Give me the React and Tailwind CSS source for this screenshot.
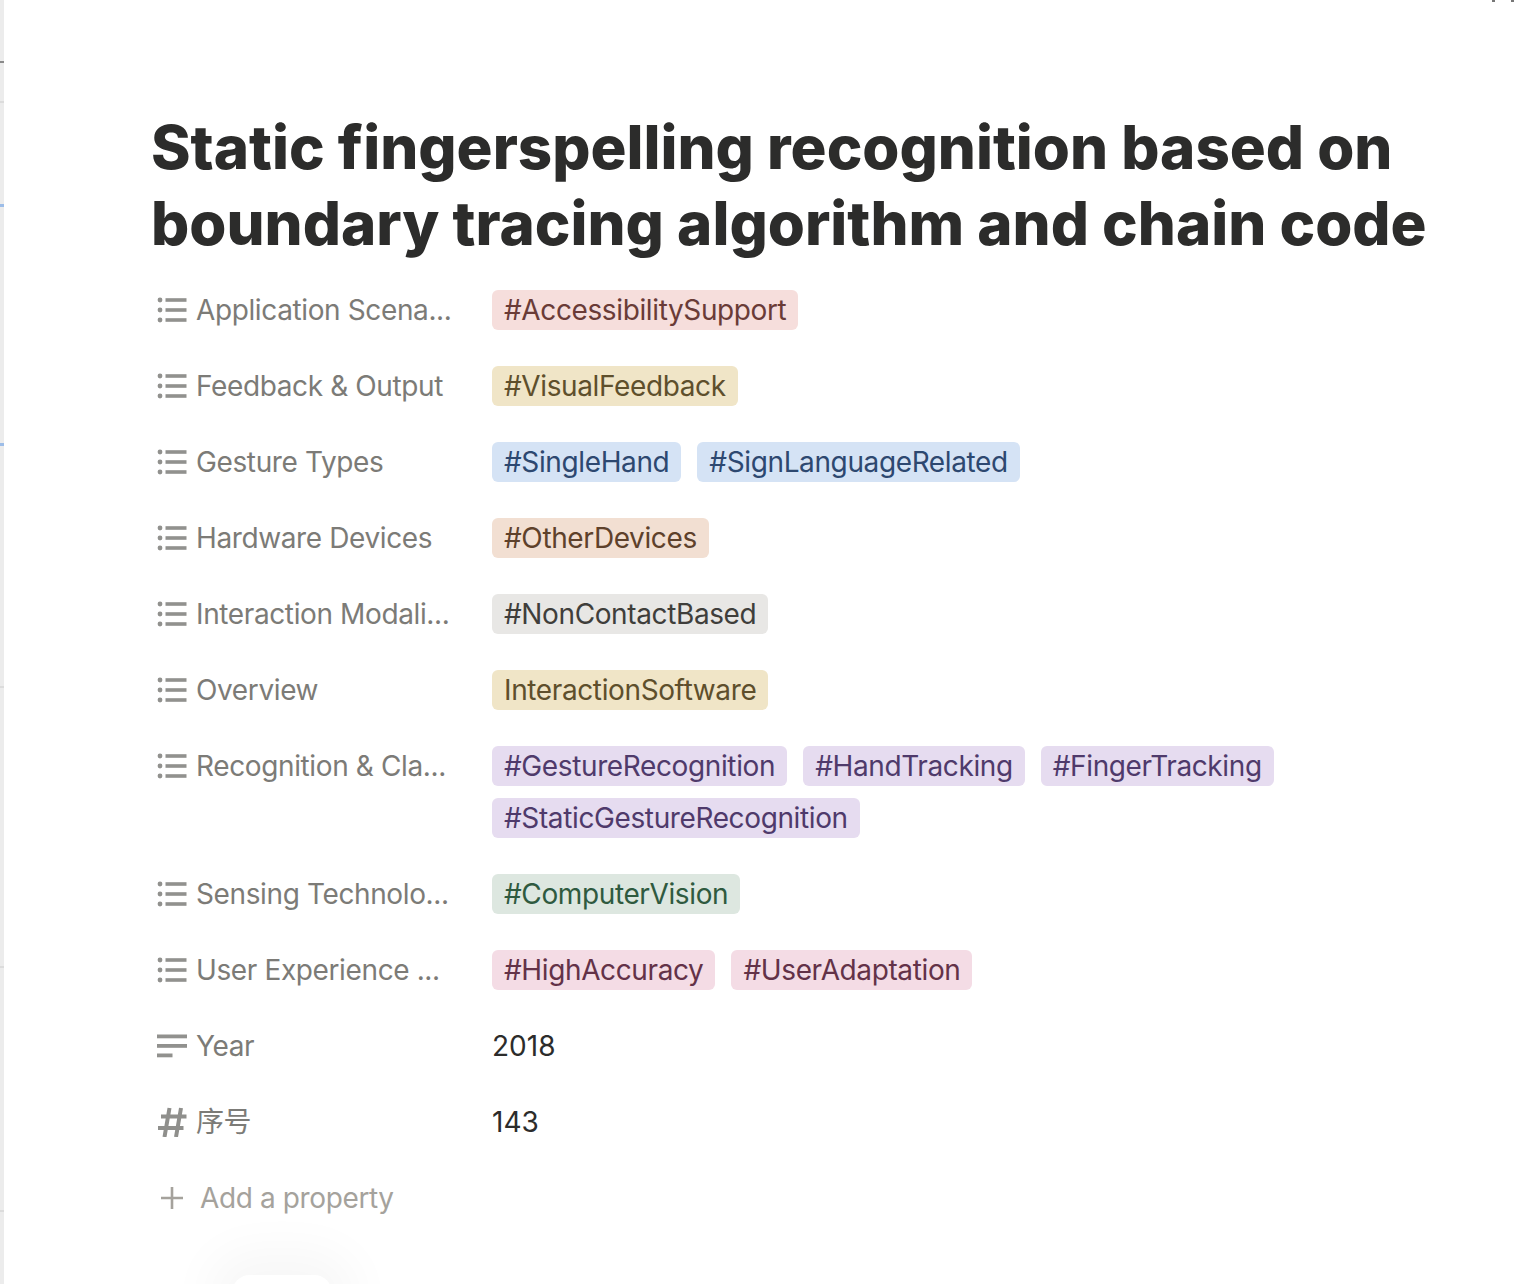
import React from "react";

const ListIcon = () => (
  <svg width="30" height="26" viewBox="0 0 30 26" className="shrink-0 text-[#91918e]" fill="currentColor">
    <circle cx="3" cy="3" r="2.4" />
    <circle cx="3" cy="13" r="2.4" />
    <circle cx="3" cy="23" r="2.4" />
    <rect x="8.500" y="1.200" width="21" height="3.600" />
    <rect x="8.500" y="11.200" width="21" height="3.600" />
    <rect x="8.500" y="21.200" width="21" height="3.600" />
  </svg>
);

const TextIcon = () => (
  <svg width="30" height="26" viewBox="0 0 30 26" className="shrink-0 text-[#91918e]" fill="currentColor">
    <rect x="0" y="1.500" width="30" height="3.800" />
    <rect x="0" y="11" width="30" height="3.800" />
    <rect x="0" y="20.500" width="15.500" height="3.800" />
  </svg>
);

const NumberIcon = () => (
  <svg width="30" height="30" viewBox="0 0 30 30" className="shrink-0 text-[#8f8f8c]" fill="none" stroke="currentColor" strokeWidth="4">
    <path d="M12.500 1 7.500 30M24 1l-5 29M4 9.500h25.500M1 21h25.500" />
  </svg>
);

const colors = {
  red: "bg-[#f6dedc] text-[#6a3b37]",
  yellow: "bg-[#f0e5c7] text-[#5e4f2c]",
  blue: "bg-[#d5e3f5] text-[#2d4870]",
  orange: "bg-[#f2dfd2] text-[#5e412b]",
  gray: "bg-[#e8e7e5] text-[#3f3e3b]",
  purple: "bg-[#e6dcf0] text-[#4f3a6b]",
  green: "bg-[#dde7e0] text-[#2f5a3f]",
  pink: "bg-[#f4dce5] text-[#633248]",
};

const rows = [
  { label: "Application Scena...", color: "red", tags: ["#AccessibilitySupport"] },
  { label: "Feedback & Output", color: "yellow", tags: ["#VisualFeedback"] },
  { label: "Gesture Types", color: "blue", tags: ["#SingleHand", "#SignLanguageRelated"] },
  { label: "Hardware Devices", color: "orange", tags: ["#OtherDevices"] },
  { label: "Interaction Modali...", color: "gray", tags: ["#NonContactBased"] },
  { label: "Overview", color: "yellow", tags: ["InteractionSoftware"] },
  {
    label: "Recognition & Cla...",
    color: "purple",
    tags: ["#GestureRecognition", "#HandTracking", "#FingerTracking", "#StaticGestureRecognition"],
  },
  { label: "Sensing Technolo...", color: "green", tags: ["#ComputerVision"] },
  { label: "User Experience ...", color: "pink", tags: ["#HighAccuracy", "#UserAdaptation"] },
];

const Label = ({ icon, children }) => (
  <div className="flex h-[40px] w-[340px] shrink-0 items-center gap-[9px] pl-[5px] text-[#7c7b77]">
    {icon}
    <span className="whitespace-nowrap">{children}</span>
  </div>
);

const App = () => {
  return (
    <div className="relative h-[1284px] w-[1520px] overflow-hidden bg-white font-['Inter','Noto_Sans_CJK_SC',sans-serif]">
      {/* edge of the window behind */}
      <div className="absolute left-0 top-0 h-full w-[4px] bg-[#ececec]">
        <div className="absolute left-0 top-[61px] h-[2px] w-full bg-[#8a8a8a]" />
        <div className="absolute left-0 top-[101px] h-[2px] w-full bg-[#dcdcdc]" />
        <div className="absolute left-0 top-[204px] h-[3px] w-full bg-[#9dbde8]" />
        <div className="absolute left-0 top-[443px] h-[3px] w-full bg-[#9dbde8]" />
        <div className="absolute left-0 top-[686px] h-[2px] w-full bg-[#dcdcdc]" />
        <div className="absolute left-0 top-[966px] h-[2px] w-full bg-[#dcdcdc]" />
        <div className="absolute left-0 top-[1210px] h-[2px] w-full bg-[#dcdcdc]" />
      </div>
      <div className="absolute left-[1492px] top-0 h-[2px] w-[3px] bg-[#777]" />
      <div className="absolute left-[1511px] top-0 h-[2px] w-[3px] bg-[#777]" />

      <div className="pl-[152px] pr-[70px] pt-[109px]">
        <h1 className="-ml-px whitespace-nowrap text-[60px] font-extrabold leading-[76px] text-[#2c2c2b]">
          Static fingerspelling recognition based on
          <br />
          boundary tracing algorithm and chain code
        </h1>

        <div className="mt-[29px] flex flex-col gap-[36px] text-[28px] leading-[40px] tracking-[-0.38px]">
          {rows.map((row) => (
            <div key={row.label} className="flex">
              <Label icon={<ListIcon />}>{row.label}</Label>
              <div className="flex flex-1 flex-wrap gap-x-[16px] gap-y-[12px]">
                {row.tags.map((tag) => (
                  <span key={tag} className={`h-[40px] whitespace-nowrap rounded-[6px] px-[12px] ${colors[row.color]}`}>
                    {tag}
                  </span>
                ))}
              </div>
            </div>
          ))}

          <div className="flex">
            <Label icon={<TextIcon />}>Year</Label>
            <span className="tracking-normal text-[#2c2c2b]">2018</span>
          </div>
          <div className="flex">
            <Label icon={<NumberIcon />}>序号</Label>
            <span className="tracking-normal text-[#2c2c2b]">143</span>
          </div>
          <div className="flex h-[40px] items-center gap-[16px] pl-[8px] text-[#a5a29c]">
            <svg width="24" height="24" viewBox="0 0 24 24" fill="none" stroke="currentColor" strokeWidth="2.6">
              <path d="M12 1v22M1 12h22" />
            </svg>
            <span>Add a property</span>
          </div>
        </div>
      </div>

      {/* floating button peeking in at the bottom */}
      <div className="absolute left-[232px] top-[1275px] h-[40px] w-[100px] rounded-[18px] bg-white shadow-[0_0_50px_24px_rgba(0,0,0,0.035)]" />
    </div>
  );
};

export default App;
